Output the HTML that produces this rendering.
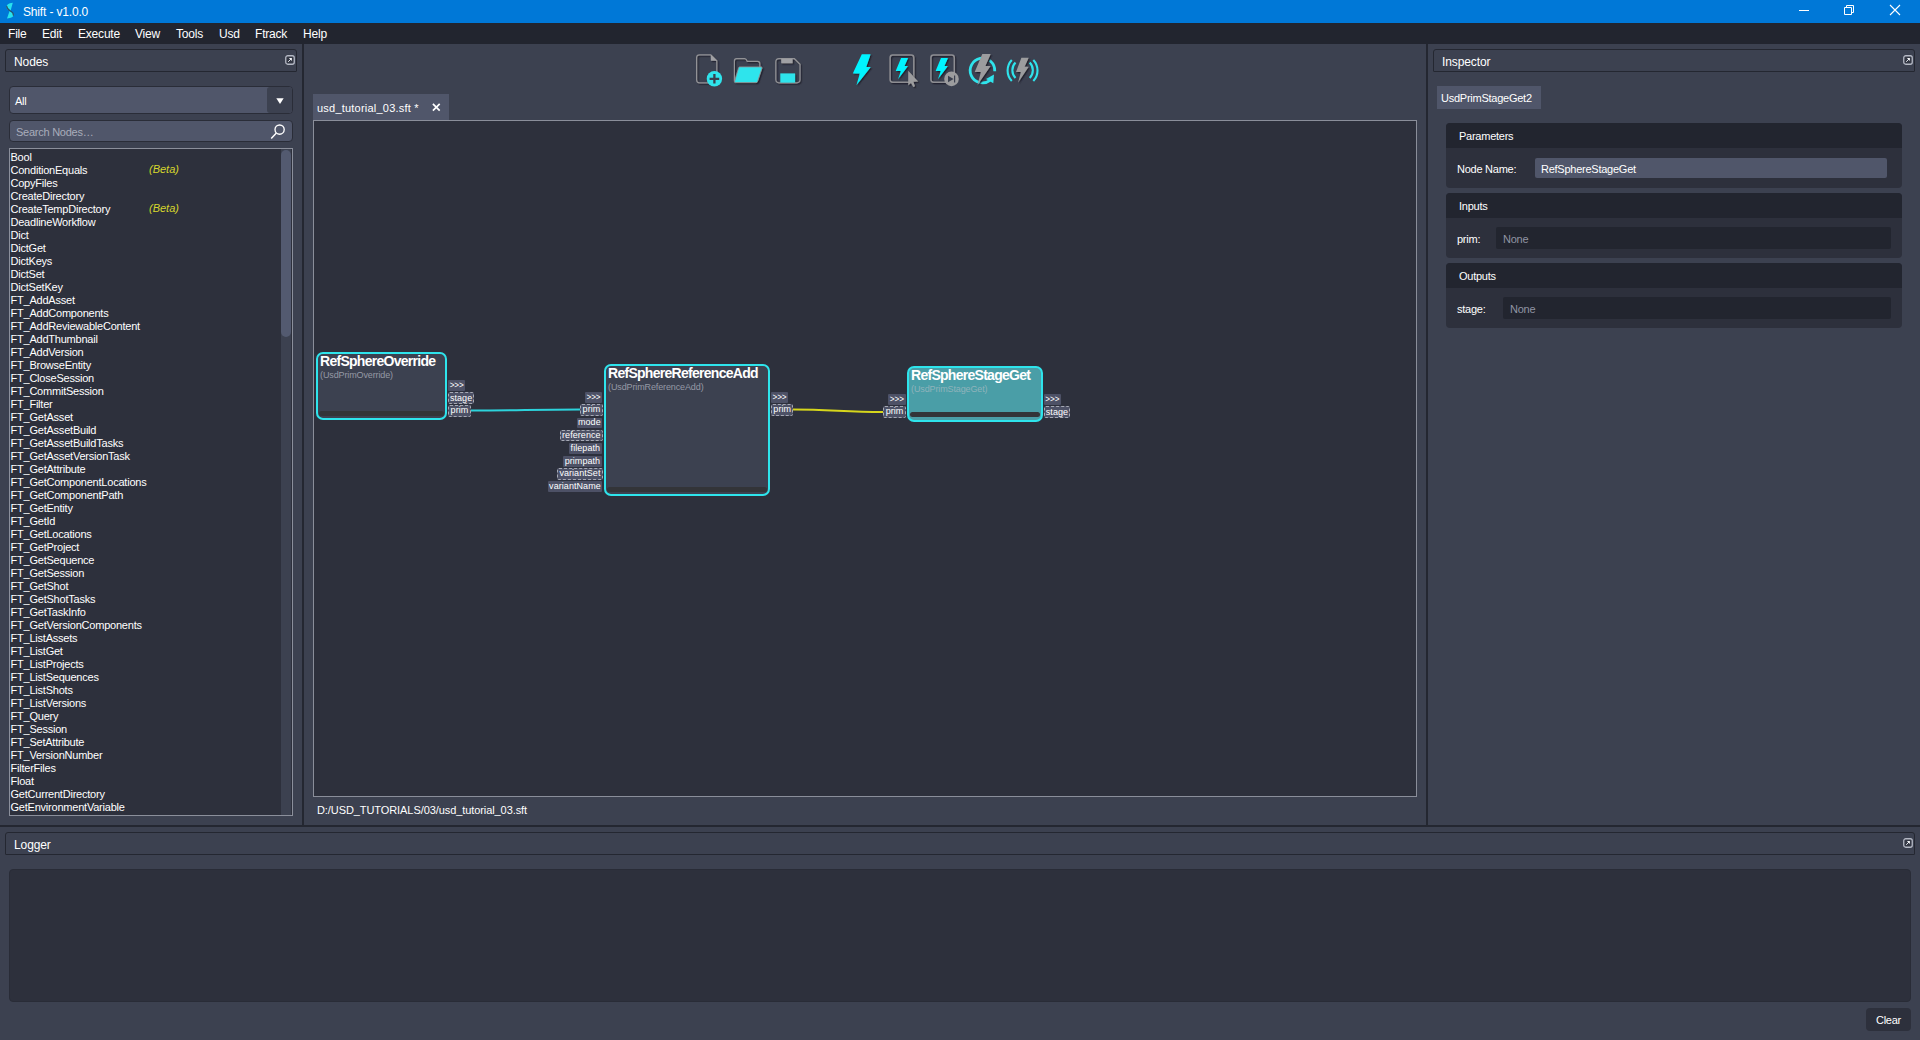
<!DOCTYPE html>
<html lang="en">
<head>
<meta charset="utf-8">
<title>Shift - v1.0.0</title>
<style>
*{box-sizing:border-box;margin:0;padding:0}
html,body{width:1920px;height:1040px;overflow:hidden;background:#3c4150;font-family:"Liberation Sans",sans-serif;font-size:11px;letter-spacing:-0.25px;color:#fff}
.abs,.abs>*{position:absolute}
#app{position:relative;width:1920px;height:1040px;overflow:hidden}
#app>*{position:absolute}
/* title bar */
#titlebar{left:0;top:0;width:1920px;height:23px;background:#0078d7}
#titlebar .t{position:absolute;left:23px;top:5px;font-size:12px;line-height:15px;letter-spacing:-0.16px;color:#fff;white-space:nowrap}
#titlebar svg{position:absolute}
#menubar{left:0;top:23px;width:1920px;height:21px;background:#22252f}
#menubar span{position:absolute;top:4px;font-size:12px;line-height:14px;letter-spacing:-0.2px;color:#fff;white-space:nowrap}
/* dock headers */
.dock{height:23px;border:1px solid #242731;border-radius:3px 3px 1px 1px;background:#3c4150}
.dock .t{position:absolute;left:8px;top:5px;font-size:12px;line-height:14px;letter-spacing:-0.1px;white-space:nowrap}
.dock svg{position:absolute;right:1px;top:5px}
.vsplit{width:2px;background:#242731}
.hsplit{height:2px;background:#242731}
/* nodes panel */
#combo{left:9px;top:86px;width:284px;height:28px;border:1px solid #2a2d38;border-radius:4px;background:#50566a;overflow:hidden}
#combo .dd{position:absolute;right:0;top:0;width:25px;height:26px;background:#3c4150;border-radius:3px}
#combo .t{position:absolute;left:5px;top:7.5px;line-height:13px}
#combo svg{position:absolute;right:8px;top:11px}
#search{left:9px;top:120px;width:284px;height:22px;border:1px solid #2a2d38;border-radius:4px;background:#50566a}
#search .t{position:absolute;left:6px;top:5px;line-height:13px;color:#a9adbb}
#search svg{position:absolute;right:5px;top:2px}
#list{left:9px;top:148px;width:284px;height:668px;border:1px solid #8b8f9b;background:#2d303c;overflow:hidden}
#list .items{position:absolute;left:0;top:2px;width:271px}
.li{position:relative;height:13px;line-height:13px;padding-left:0.5px;white-space:nowrap;font-size:11px;letter-spacing:-0.22px}
.li .beta{position:absolute;left:139px;top:-1px;color:#d6d62c;font-style:italic;font-size:11px;letter-spacing:0}
#list .track{position:absolute;right:1px;top:0;width:10px;height:666px;background:#3c4150}
#list .thumb{position:absolute;left:0;top:1px;width:10px;height:187px;border-radius:5px;background:#535a70}
/* center */
#tab{left:313px;top:94px;width:136px;height:26px;background:#50566a}
#tab .t{position:absolute;left:4px;top:8px;line-height:13px;white-space:nowrap;letter-spacing:0.22px}
#tab svg{position:absolute;left:119px;top:9px}
#canvas{left:313px;top:120px;width:1104px;height:677px;border:1px solid #8a8e9a;background:#2d303c;overflow:hidden}
#path{left:317px;top:804px;line-height:13px;white-space:nowrap;letter-spacing:-0.08px}
/* graph */
#graph{left:0;top:0;width:1920px;height:1040px;pointer-events:none}
.node{position:absolute;border:2px solid #2ee4ec;border-radius:7px;background:#3c4150}
.node.sel{background:#4a9ea7}
.node .nm{position:absolute;left:2px;top:-1px;font-weight:bold;font-size:14px;line-height:16px;letter-spacing:-0.72px;white-space:nowrap;color:#fff}
.node .ty{position:absolute;left:2px;top:15.7px;font-size:9px;line-height:11px;letter-spacing:-0.12px;white-space:nowrap;color:#9599a5}
.node.sel .ty{color:#8fb3bb}
.node .bar{position:absolute;left:1px;right:1px;bottom:2px;height:5px;border-radius:3px;background:#333438}
.pt{position:absolute;height:10.5px;border-radius:1px;background:#4d5166;color:#fff;font-size:9px;line-height:10.5px;letter-spacing:0.06px;white-space:nowrap;text-align:center;overflow:visible}
.pt.a{font-size:8.2px;letter-spacing:-0.1px;line-height:11.6px}
.pt.d{height:11.8px;line-height:10.9px;border:1px dashed #a6a9b4;border-radius:2px;background:#4d5166}
.pt.u{line-height:9.4px}
.node.sel .bar{bottom:3px}
/* inspector */
#itab{left:1437px;top:86px;width:104px;height:23px;background:#50566a}
#itab .t{position:absolute;left:4px;top:6px;line-height:13px;white-space:nowrap}
.grp{left:1446px;width:456px;height:65px;border-radius:4px;background:#2d303c;overflow:hidden}
.grp .h{position:absolute;left:0;top:0;width:100%;height:25px;background:#22252f}
.grp .h .t{position:absolute;left:13px;top:7px;line-height:13px}
.grp .lb{position:absolute;left:11px;top:40px;line-height:13px;white-space:nowrap}
.grp .in{position:absolute;height:22px;border-radius:2px;background:#22252f}
.grp .in .t{position:absolute;left:7px;top:5.5px;line-height:13px;color:#9094a3;white-space:nowrap}
.grp .in.l{background:#50566a;height:20px}
.grp .in.l .t{color:#fff;left:6px;top:4.5px}
/* logger */
#logbox{left:9px;top:869px;width:1902px;height:133px;border:1px solid #292c37;border-radius:4px;background:#2d303c}
#clear{left:1866px;top:1008px;width:45px;height:23px;border-radius:4px;background:#2d303c}
#clear .t{position:absolute;left:0;width:100%;text-align:center;top:6px;line-height:13px}

</style>
</head>
<body>
<div id="app">

<!-- ===== title bar ===== -->
<div id="titlebar">
  <svg style="left:0;top:0" width="24" height="23" viewBox="0 0 24 23">
    <path d="M12.8 2.8 C8.6 2.9 6.2 5.2 6.6 7.7 C6.9 9.5 8.8 10.3 10.5 11.1 Z" fill="#27e2ee"/>
    <path d="M7 18.4 L9.6 10.9 C11.6 11.7 13.5 12.8 13.7 14.5 C13.9 16.8 10.8 18.3 7 18.4 Z" fill="#27e2ee"/>
    <path d="M6.8 6.3 C6.9 8.4 8.4 9.8 10.1 10.8 C12.2 12 13.6 13.1 13.4 15.2" fill="none" stroke="#2c4560" stroke-width="1.2" stroke-linecap="round" opacity="0.9"/>
  </svg>
  <div class="t">Shift - v1.0.0</div>
  <svg style="left:1790px;top:0" width="120" height="23" viewBox="1790 0 120 23" fill="none" stroke="#fff" stroke-width="1">
    <path d="M1799 10.5 H1809"/>
    <path d="M1844.5 7.5 H1851.5 V14.5 H1844.5 Z M1846.5 7.5 V5.5 H1853.5 V12.5 H1851.5"/>
    <path d="M1890 5 L1900 15 M1900 5 L1890 15" stroke-width="1.1"/>
  </svg>
</div>

<!-- ===== menu bar ===== -->
<div id="menubar">
  <span style="left:8px">File</span>
  <span style="left:42px">Edit</span>
  <span style="left:78px">Execute</span>
  <span style="left:135px">View</span>
  <span style="left:176px">Tools</span>
  <span style="left:219px">Usd</span>
  <span style="left:255px">Ftrack</span>
  <span style="left:303px">Help</span>
</div>

<!-- ===== splitters ===== -->
<div class="vsplit" style="left:302px;top:44px;height:781px"></div>
<div class="vsplit" style="left:1426px;top:44px;height:781px"></div>
<div class="hsplit" style="left:0;top:825px;width:1920px"></div>

<!-- ===== Nodes dock ===== -->
<div class="dock" style="left:5px;top:49px;width:292px">
  <div class="t">Nodes</div>
  <svg width="10" height="10" viewBox="0 0 10 10" fill="none"><rect x="0.75" y="0.75" width="8.5" height="8.5" rx="2" stroke-width="1.3" stroke="#b4b8c4" fill="#343845"/><path d="M3.2 6.8 L6 4" stroke="#e4e6ec" stroke-width="1"/><path d="M3.9 3.1 H6.9 V6.1 Z" fill="#f4f5f8"/></svg>
</div>
<div id="combo"><div class="dd"></div><div class="t">All</div>
  <svg width="8" height="6" viewBox="0 0 8 6"><path d="M0.3 0.2 H7.7 L4 5.9 Z" fill="#fff"/></svg>
</div>
<div id="search"><div class="t">Search Nodes…</div>
  <svg width="18" height="18" viewBox="0 0 18 18" fill="none" stroke="#fff" stroke-width="1.35"><circle cx="10.6" cy="6.6" r="4.6"/><path d="M7.4 10 L2.2 15.4" stroke-width="1.5"/></svg>
</div>
<div id="list">
  <div class="items">
<div class="li">Bool</div>
<div class="li">ConditionEquals<i class="beta">(Beta)</i></div>
<div class="li">CopyFiles</div>
<div class="li">CreateDirectory</div>
<div class="li">CreateTempDirectory<i class="beta">(Beta)</i></div>
<div class="li">DeadlineWorkflow</div>
<div class="li">Dict</div>
<div class="li">DictGet</div>
<div class="li">DictKeys</div>
<div class="li">DictSet</div>
<div class="li">DictSetKey</div>
<div class="li">FT_AddAsset</div>
<div class="li">FT_AddComponents</div>
<div class="li">FT_AddReviewableContent</div>
<div class="li">FT_AddThumbnail</div>
<div class="li">FT_AddVersion</div>
<div class="li">FT_BrowseEntity</div>
<div class="li">FT_CloseSession</div>
<div class="li">FT_CommitSession</div>
<div class="li">FT_Filter</div>
<div class="li">FT_GetAsset</div>
<div class="li">FT_GetAssetBuild</div>
<div class="li">FT_GetAssetBuildTasks</div>
<div class="li">FT_GetAssetVersionTask</div>
<div class="li">FT_GetAttribute</div>
<div class="li">FT_GetComponentLocations</div>
<div class="li">FT_GetComponentPath</div>
<div class="li">FT_GetEntity</div>
<div class="li">FT_GetId</div>
<div class="li">FT_GetLocations</div>
<div class="li">FT_GetProject</div>
<div class="li">FT_GetSequence</div>
<div class="li">FT_GetSession</div>
<div class="li">FT_GetShot</div>
<div class="li">FT_GetShotTasks</div>
<div class="li">FT_GetTaskInfo</div>
<div class="li">FT_GetVersionComponents</div>
<div class="li">FT_ListAssets</div>
<div class="li">FT_ListGet</div>
<div class="li">FT_ListProjects</div>
<div class="li">FT_ListSequences</div>
<div class="li">FT_ListShots</div>
<div class="li">FT_ListVersions</div>
<div class="li">FT_Query</div>
<div class="li">FT_Session</div>
<div class="li">FT_SetAttribute</div>
<div class="li">FT_VersionNumber</div>
<div class="li">FilterFiles</div>
<div class="li">Float</div>
<div class="li">GetCurrentDirectory</div>
<div class="li">GetEnvironmentVariable</div>
  </div>
  <div class="track"><div class="thumb"></div></div>
</div>

<!-- ===== toolbar icons ===== -->
<svg id="tools" style="left:690px;top:50px" width="360" height="40" viewBox="690 50 360 40">
    <defs>
    <filter id="sh" x="-10%" y="-10%" width="130%" height="130%"><feDropShadow dx="1.3" dy="1.3" stdDeviation="0.35" flood-color="#20232d" flood-opacity="1"/></filter>
  </defs>
  <g filter="url(#sh)">
    <!-- new file -->
    <path d="M699.5 54.8 H710.8 L716.8 60.8 V80 Q716.8 82.8 714 82.8 H699.5 Q696.6 82.8 696.6 80 V57.6 Q696.6 54.8 699.5 54.8 Z" fill="none" stroke="#929296" stroke-width="1.2"/>
    <path d="M710.8 54.8 V60.8 H716.8 Z" fill="#a0a0a4"/>
    <!-- folder -->
    <path d="M734.4 81.5 V60.8 Q734.4 58.6 736.6 58.6 H744.6 Q745.8 58.6 746.4 59.8 L747.2 61.4 H757.6 Q759.8 61.4 759.8 63.6 V67" fill="none" stroke="#929296" stroke-width="1.2"/>
    <path d="M739.6 66.9 H761 Q762.4 66.9 762 68.2 L757.6 81.4 Q757.2 82.6 756 82.6 H735.4 Q734.2 82.6 734.6 81.4 L738.6 67.8 Q738.9 66.9 739.6 66.9 Z" fill="#2fe4ec" stroke="#929296" stroke-width="0.8"/>
    <!-- save -->
    <path d="M779 58.7 H794.4 L800 64.2 V79.6 Q800 82.8 796.8 82.8 H779 Q775.8 82.8 775.8 79.6 V61.9 Q775.8 58.7 779 58.7 Z" fill="none" stroke="#929296" stroke-width="1.2"/>
    <rect x="781.2" y="58.7" width="11.4" height="4.6" fill="#a0a0a4"/>
    <rect x="780.3" y="73.4" width="14.8" height="9.2" fill="#2fe4ec"/>
    <!-- bolt -->
    <path d="M861.8 54.3 H870.6 L866.2 67 H870.8 L856.4 85.2 L859.8 73.6 H852.8 Z" fill="#00f4ff"/>
    <!-- box bolt + cursor -->
    <rect x="890.1" y="55.1" width="23.7" height="27.1" rx="2.6" fill="none" stroke="#8d8d92" stroke-width="1.5"/>
    <path d="M901.1 57.9 H908.1 L904.5 66.1 H908 L898 79.3 L900.9 71.1 H895.7 Z" fill="#00f4ff"/>
    <!-- box bolt + play -->
    <rect x="930.9" y="55.1" width="23.4" height="27.1" rx="2.6" fill="none" stroke="#8d8d92" stroke-width="1.5"/>
    <path d="M941 57.9 H948 L944.4 66.1 H947.9 L937.9 79.3 L940.8 71.1 H935.6 Z" fill="#00f4ff"/>
  </g>
  <!-- new-file plus badge -->
  <circle cx="714.4" cy="78.8" r="7.7" fill="#2fe4ec"/>
  <path d="M714.4 74 V83.6 M709.6 78.8 H719.2" stroke="#3a3f4d" stroke-width="2.3" fill="none"/>
  <!-- cursor -->
  <path d="M908.2 70.8 V85.6 L911 82.9 L913.2 86.9 L915 86.2 L913.4 81.8 L918.2 81.6 Z" fill="#9c9c9e" filter="url(#sh)"/>
  <!-- play badge -->
  <circle cx="951.5" cy="78.9" r="7.3" fill="#9c9c9e"/>
  <path d="M948 75.8 V82.2 L953.6 79 Z" fill="#3c4150"/>
  <path d="M954.6 75.4 V82.6" stroke="#3c4150" stroke-width="1.2"/>
  <!-- refresh bolt -->
  <path d="M994.75 71.2 A12.3 12.3 0 1 0 990 80.3" fill="none" stroke="#2fe4ec" stroke-width="2.8"/>
  <path d="M994 74.6 L993.3 83.3 L986 78.9 Z" fill="#2fe4ec"/>
  <path d="M982.3 54.1 H990.7 L985.4 66 H990.6 L977.5 85 L980.9 72 H974.7 Z" fill="#9c9c9e" filter="url(#sh)"/>
  <!-- broadcast bolt -->
  <g fill="none" stroke="#2fe4ec" stroke-width="2.1" stroke-linecap="butt">
    <path d="M1011.8 60 A15.2 15.2 0 0 0 1011.8 81"/>
    <path d="M1015.5 62.6 A11 11 0 0 0 1015.5 78"/>
    <path d="M1033.3 60 A15.2 15.2 0 0 1 1033.3 81"/>
    <path d="M1029.7 62.6 A11 11 0 0 1 1029.7 78"/>
  </g>
  <path d="M1021.4 57.8 H1028.7 L1024.6 66.8 H1028.7 L1018 82.7 L1020.9 72.1 H1016 Z" fill="#9c9c9e" filter="url(#sh)"/>

</svg>

<!-- ===== centre tab + canvas ===== -->
<div id="tab"><div class="t">usd_tutorial_03.sft *</div>
  <svg width="9" height="9" viewBox="0 0 9 9"><path d="M0.9 0.9 L7.7 7.7 M7.7 0.9 L0.9 7.7" stroke="#fff" stroke-width="1.7" fill="none"/></svg>
</div>
<div id="canvas"></div>
<div id="path">D:/USD_TUTORIALS/03/usd_tutorial_03.sft</div>

<!-- ===== graph ===== -->
<div id="graph">
  <svg style="position:absolute;left:440px;top:400px" width="460" height="20" viewBox="440 400 460 20" fill="none">
    <path d="M471 410.6 C520 410.6 530 409.6 580 409.6" stroke="#2cd3dc" stroke-width="2"/>
    <path d="M793 409.6 C830 409.6 845 412 883 412" stroke="#d6d61c" stroke-width="2"/>
  </svg>

  <div class="node" style="left:316px;top:352px;width:131px;height:68px"><div class="nm">RefSphereOverride</div><div class="ty">(UsdPrimOverride)</div><div class="bar"></div></div>
  <div class="pt a" style="left:448px;top:380.2px;width:17.4px">&gt;&gt;&gt;</div>
  <div class="pt d" style="left:448px;top:392.3px;width:26.1px">stage</div>
  <div class="pt d u" style="left:448px;top:405.2px;width:22.9px">prim</div>

  <div class="node" style="left:604px;top:364px;width:166px;height:132px"><div class="nm">RefSphereReferenceAdd</div><div class="ty">(UsdPrimReferenceAdd)</div><div class="bar"></div></div>
  <div class="pt a" style="left:585px;top:392.2px;width:17px">&gt;&gt;&gt;</div>
  <div class="pt d u" style="left:580.3px;top:404.1px;width:22.3px">prim</div>
  <div class="pt" style="left:576.7px;top:417.8px;width:25.3px;line-height:9px">mode</div>
  <div class="pt d" style="left:560px;top:429.5px;width:42.6px;line-height:9px">reference</div>
  <div class="pt" style="left:568.7px;top:443px;width:33.3px">filepath</div>
  <div class="pt" style="left:562.9px;top:456.2px;width:39.1px">primpath</div>
  <div class="pt d" style="left:557.3px;top:468px;width:45.3px;line-height:9px">variantSet</div>
  <div class="pt" style="left:547.9px;top:481.2px;width:54.1px">variantName</div>
  <div class="pt a" style="left:771px;top:392.1px;width:17px">&gt;&gt;&gt;</div>
  <div class="pt d u" style="left:771px;top:404.3px;width:22.4px">prim</div>

  <div class="pt a" style="left:888px;top:394.2px;width:17.6px">&gt;&gt;&gt;</div>
  <div class="pt d u" style="left:883px;top:406.3px;width:23px">prim</div>
  <div class="node sel" style="left:907px;top:366px;width:136px;height:56px"><div class="nm">RefSphereStageGet</div><div class="ty">(UsdPrimStageGet)</div><div class="bar"></div></div>
  <div class="pt a" style="left:1044.2px;top:394.2px;width:16.4px">&gt;&gt;&gt;</div>
  <div class="pt d" style="left:1044px;top:406.3px;width:25.9px">stage</div>
</div>

<!-- ===== Inspector dock ===== -->
<div class="dock" style="left:1433px;top:49px;width:482px">
  <div class="t">Inspector</div>
  <svg width="10" height="10" viewBox="0 0 10 10" fill="none"><rect x="0.75" y="0.75" width="8.5" height="8.5" rx="2" stroke-width="1.3" stroke="#b4b8c4" fill="#343845"/><path d="M3.2 6.8 L6 4" stroke="#e4e6ec" stroke-width="1"/><path d="M3.9 3.1 H6.9 V6.1 Z" fill="#f4f5f8"/></svg>
</div>
<div id="itab"><div class="t">UsdPrimStageGet2</div></div>

<div class="grp" style="top:123px">
  <div class="h"><div class="t">Parameters</div></div>
  <div class="lb">Node Name:</div>
  <div class="in l" style="left:89px;top:35px;width:352px"><div class="t">RefSphereStageGet</div></div>
</div>
<div class="grp" style="top:193px">
  <div class="h"><div class="t">Inputs</div></div>
  <div class="lb">prim:</div>
  <div class="in" style="left:50px;top:34px;width:395px"><div class="t">None</div></div>
</div>
<div class="grp" style="top:263px">
  <div class="h"><div class="t">Outputs</div></div>
  <div class="lb">stage:</div>
  <div class="in" style="left:57px;top:34px;width:388px"><div class="t">None</div></div>
</div>

<!-- ===== Logger dock ===== -->
<div class="dock" style="left:5px;top:832px;width:1910px">
  <div class="t">Logger</div>
  <svg width="10" height="10" viewBox="0 0 10 10" fill="none"><rect x="0.75" y="0.75" width="8.5" height="8.5" rx="2" stroke-width="1.3" stroke="#b4b8c4" fill="#343845"/><path d="M3.2 6.8 L6 4" stroke="#e4e6ec" stroke-width="1"/><path d="M3.9 3.1 H6.9 V6.1 Z" fill="#f4f5f8"/></svg>
</div>
<div id="logbox"></div>
<div id="clear"><div class="t">Clear</div></div>

</div>

</body>
</html>
